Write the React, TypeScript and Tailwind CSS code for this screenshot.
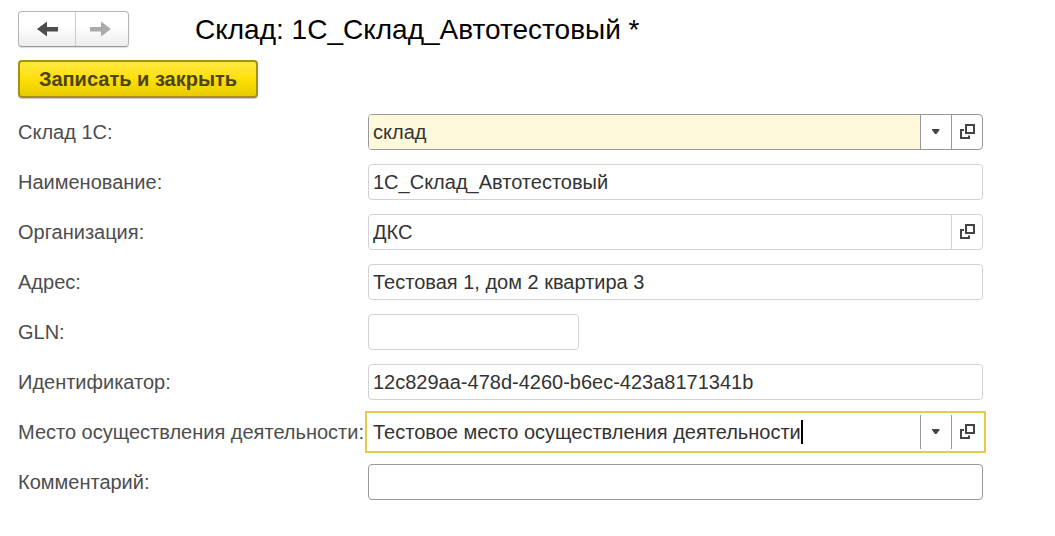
import { useState } from "react";

type Tone = "light" | "dark" | "focus";

interface Field {
  id: string;
  label: string;
  value: string;
  tone: Tone;
  highlighted?: boolean;
  dropdown?: boolean;
  open?: boolean;
  short?: boolean;
}

const fields: Field[] = [
  { id: "warehouse", label: "Склад 1С:", value: "склад", tone: "dark", highlighted: true, dropdown: true, open: true },
  { id: "name", label: "Наименование:", value: "1С_Склад_Автотестовый", tone: "light" },
  { id: "organization", label: "Организация:", value: "ДКС", tone: "light", open: true },
  { id: "address", label: "Адрес:", value: "Тестовая 1, дом 2 квартира 3", tone: "light" },
  { id: "gln", label: "GLN:", value: "", tone: "light", short: true },
  { id: "identifier", label: "Идентификатор:", value: "12c829aa-478d-4260-b6ec-423a8171341b", tone: "light" },
  { id: "place", label: "Место осуществления деятельности:", value: "Тестовое место осуществления деятельности", tone: "focus", dropdown: true, open: true },
  { id: "comment", label: "Комментарий:", value: "", tone: "dark" },
];

const boxTone: Record<Tone, string> = {
  light: "rounded border-[#d2d2d2]",
  dark: "rounded border-[#999999]",
  focus: "border-transparent outline-2 outline-offset-1 outline-[#e3cc48]",
};

const dividerTone: Record<Tone, string> = {
  light: "border-[#d2d2d2]",
  dark: "border-[#999999]",
  focus: "border-[#999999]",
};

function ArrowLeft() {
  return (
    <svg width="21" height="16" viewBox="0 0 21 16" fill="currentColor" aria-hidden="true">
      <path d="M0 8 10 0.5V6H21V10.5H10V15.5Z" />
    </svg>
  );
}

function ArrowRight() {
  return (
    <svg width="21" height="16" viewBox="0 0 21 16" fill="currentColor" aria-hidden="true">
      <path d="M21 8 11 0.5V6H0V10.5H11V15.5Z" />
    </svg>
  );
}

function OpenIcon() {
  return (
    <svg width="16" height="16" viewBox="-1 0 16 16" fill="none" stroke="#444444" strokeWidth="2" aria-hidden="true">
      <path d="M6 1H14V9H6Z" />
      <path d="M4 6H1V14H9V11.5" />
    </svg>
  );
}

function CaretIcon() {
  return (
    <svg width="8" height="6" viewBox="0 0 8 6" fill="#444444" aria-hidden="true">
      <path d="M0 0H7.5V1L4.5 5H3L0 1Z" />
    </svg>
  );
}

function FieldRow({ field }: { field: Field }) {
  const [value, setValue] = useState(field.value);
  const focused = field.tone === "focus";
  return (
    <div className="flex items-center">
      <label htmlFor={field.id} className="w-[350px] shrink-0 whitespace-nowrap text-[#4d4d4d]">
        {field.label}
      </label>
      <div
        className={`flex h-9 min-w-0 overflow-hidden border bg-white ${boxTone[field.tone]} ${field.short ? "w-[211px]" : "flex-1"}`}
      >
        <div className={`flex min-w-0 flex-1 items-center pl-1 ${field.highlighted ? "bg-[#fff9db]" : ""}`}>
          <input
            id={field.id}
            value={value}
            onChange={(e) => setValue(e.target.value)}
            className={`h-full min-w-0 bg-transparent text-[#333333] outline-none ${focused ? "field-sizing-content caret-transparent" : "flex-1"}`}
          />
          {focused && <span className="h-6 w-0.5 shrink-0 bg-black" />}
        </div>
        {field.dropdown && (
          <button
            type="button"
            aria-label="Выбрать из списка"
            className={`flex w-[31px] shrink-0 items-center justify-center border-l ${dividerTone[field.tone]}`}
          >
            <CaretIcon />
          </button>
        )}
        {field.open && (
          <button
            type="button"
            aria-label="Открыть"
            className={`flex w-[31px] shrink-0 items-center justify-center border-l ${dividerTone[field.tone]}`}
          >
            <OpenIcon />
          </button>
        )}
      </div>
    </div>
  );
}

export default function App() {
  return (
    <main className="min-h-screen bg-white pt-[11px] pr-[72px] pb-9 pl-[18px] font-['Liberation_Sans',Arial,sans-serif] text-[20px] leading-6">
      <header className="flex items-center gap-[66px]">
        <nav className="flex h-9 w-[111px] shrink-0 overflow-hidden rounded border border-[#b4b4b4] border-b-[#999999] bg-linear-to-b from-white from-40% to-[#ececec] shadow-[0_1px_1px_#dddddd]">
          <button type="button" aria-label="Назад" className="flex w-14 items-center justify-center text-[#4d4d4d]">
            <ArrowLeft />
          </button>
          <button
            type="button"
            aria-label="Вперед"
            className="flex flex-1 items-center justify-center border-l border-[#cccccc] pr-1 text-[#aaaaaa]"
          >
            <ArrowRight />
          </button>
        </nav>
        <h1 className="pt-0.5 text-[28px] leading-[34px] whitespace-nowrap text-black">Склад: 1С_Склад_Автотестовый *</h1>
      </header>
      <form className="mt-[13px]" onSubmit={(e) => e.preventDefault()}>
        <button
          type="submit"
          className="flex h-[38px] w-60 items-center justify-center rounded border-2 border-[#a39017] bg-linear-to-b from-[#ffe838] via-[#fddf05] to-[#e8cb00] font-bold text-[#4d4413] shadow-[0_1px_1px_#c8c8c8]"
        >
          Записать и закрыть
        </button>
        <div className="mt-4 flex flex-col gap-3.5">
          {fields.map((field) => (
            <FieldRow key={field.id} field={field} />
          ))}
        </div>
      </form>
    </main>
  );
}
